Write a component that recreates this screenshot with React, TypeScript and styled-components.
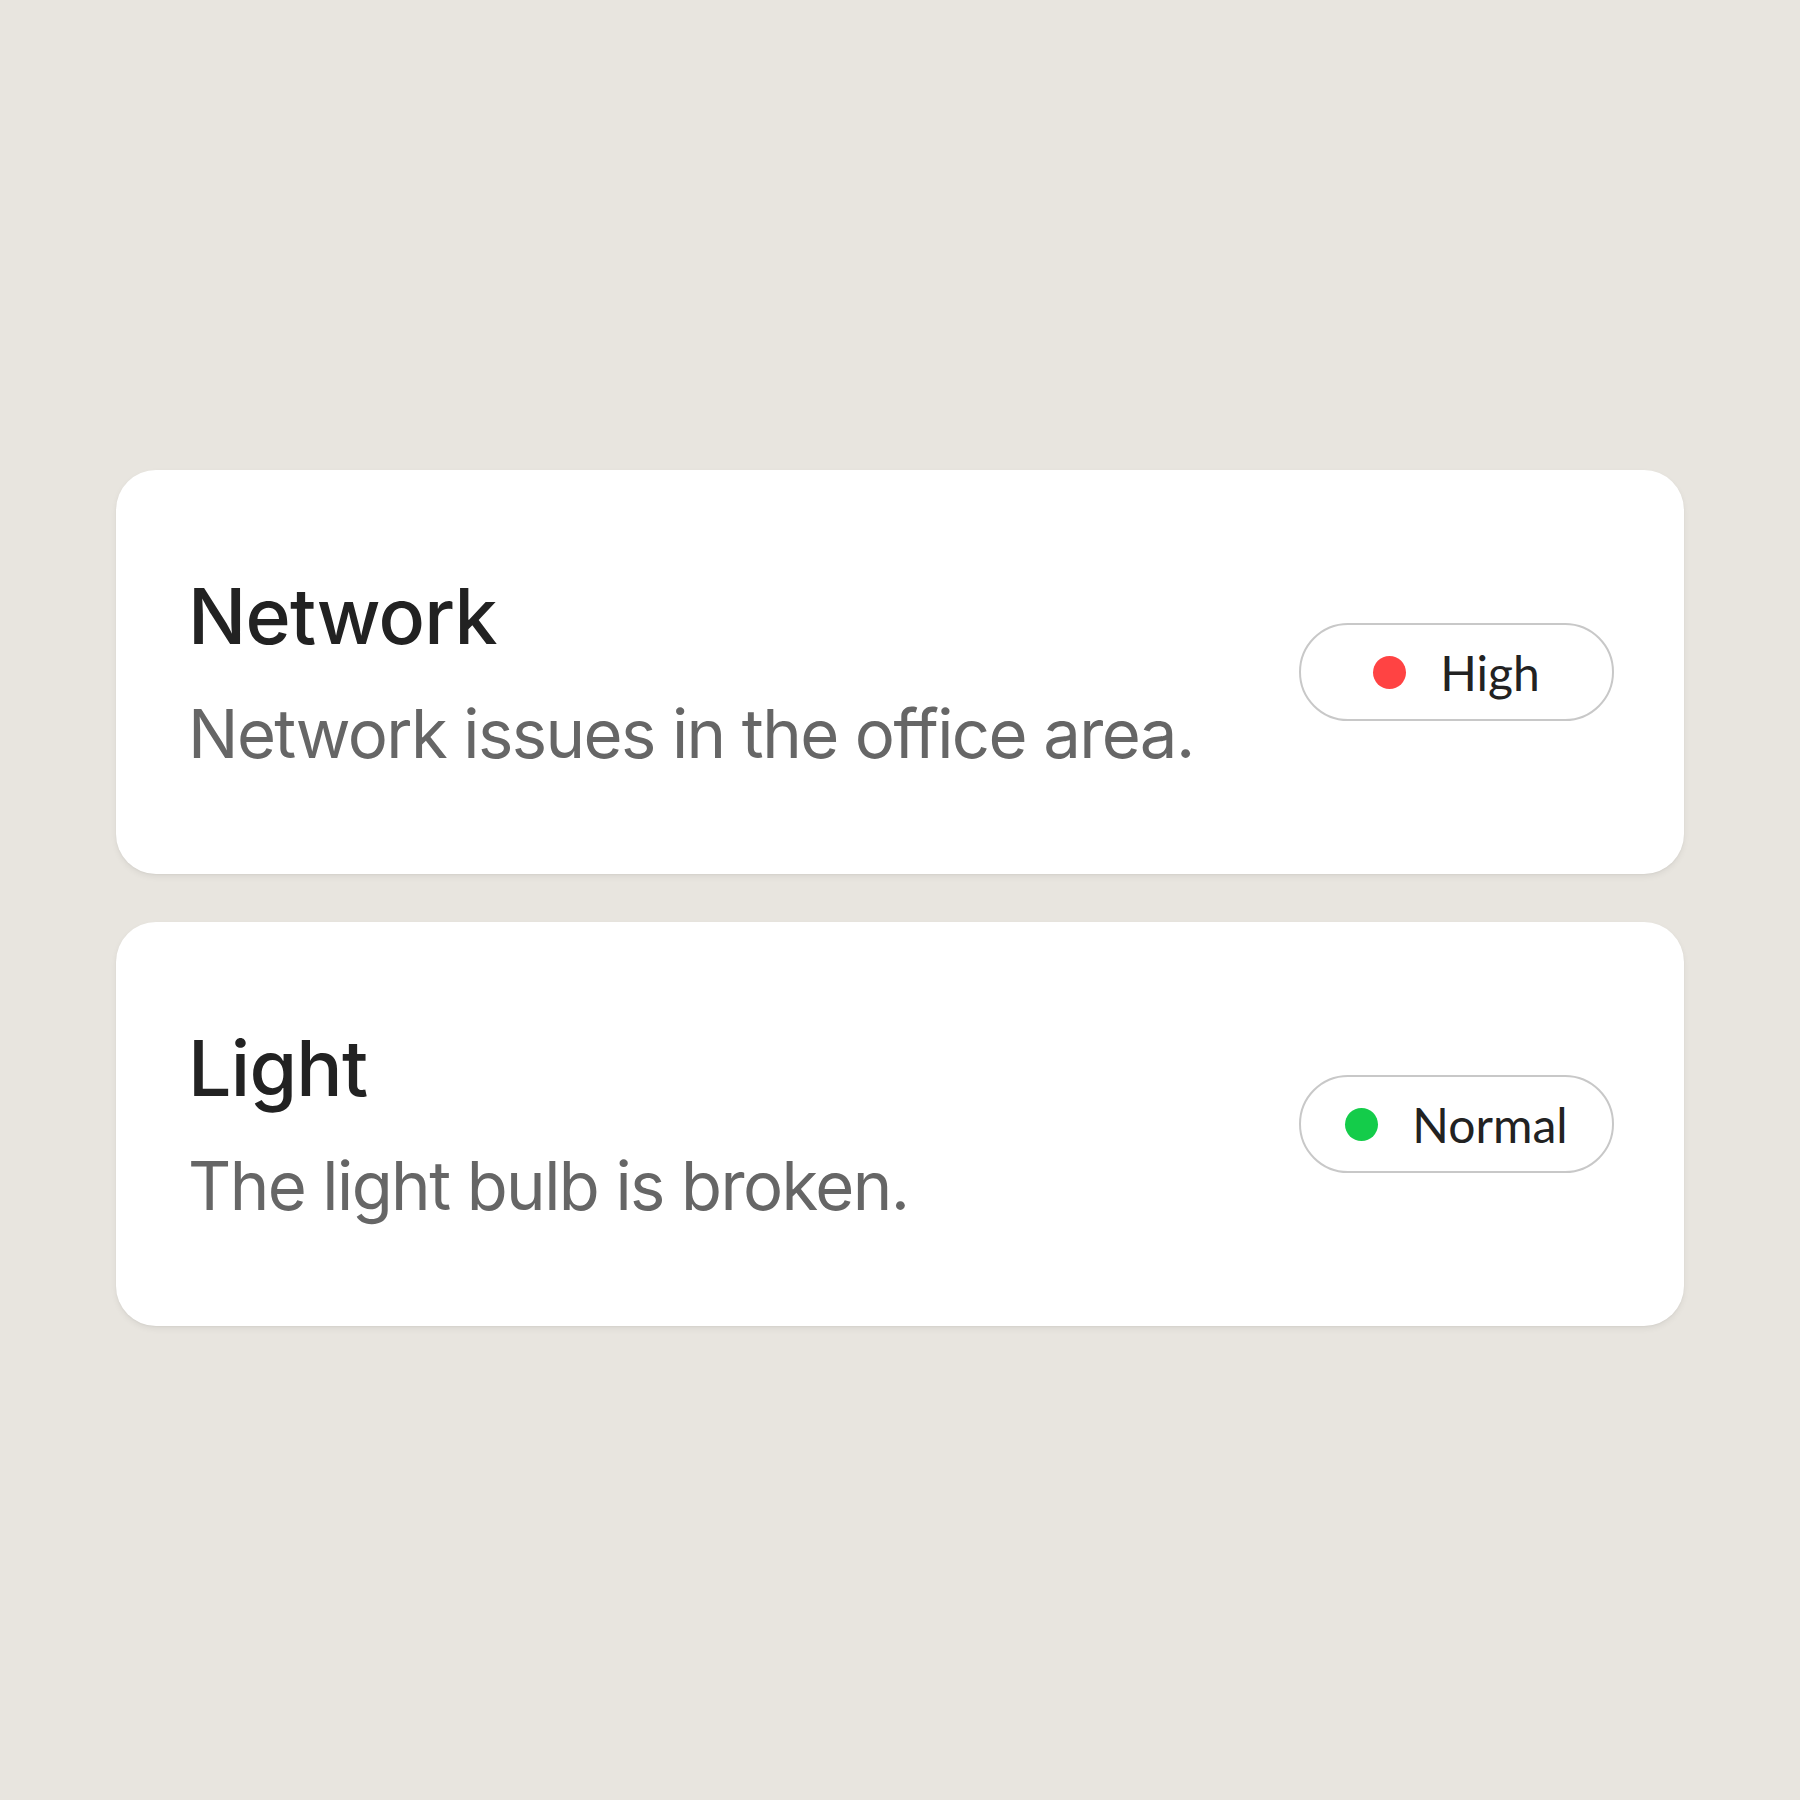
import styled, { createGlobalStyle } from "styled-components";

const GlobalStyle = createGlobalStyle`
  html, body {
    margin: 0;
    padding: 0;
    background: #e8e5df;
  }
  body {
    font-family: Inter, "Noto Sans", sans-serif;
  }
`;

const Page = styled.main`
  width: 1800px;
  height: 1800px;
  display: flex;
  flex-direction: column;
  justify-content: center;
  align-items: center;
  gap: 48px;
  margin-top: -2px;
  background: #e8e5df;
`;

const Card = styled.article`
  width: 1568px;
  height: 404px;
  box-sizing: border-box;
  background: #ffffff;
  border-radius: 40px;
  padding: 0 70px 0 72px;
  display: flex;
  align-items: center;
  justify-content: space-between;
  box-shadow: 0 3px 6px rgba(0, 0, 0, 0.06), 0 1px 2px rgba(0, 0, 0, 0.04);
`;

const Text = styled.div`
  display: flex;
  flex-direction: column;
  gap: 30px;
`;

const Title = styled.h2`
  margin: 0;
  font-size: 77px;
  line-height: 92px;
  font-weight: 500;
  color: #222222;
  letter-spacing: -0.01em;
`;

const Description = styled.p`
  margin: 0;
  font-size: 67px;
  line-height: 83px;
  font-weight: 400;
  color: #666666;
  letter-spacing: -1.6px;
`;

const Badge = styled.div`
  width: 315px;
  height: 98px;
  box-sizing: border-box;
  border: 2.5px solid #c8c8c8;
  border-radius: 999px;
  display: flex;
  align-items: center;
  justify-content: center;
  gap: 34px;
  font-family: Lato, "Noto Sans", sans-serif;
  font-size: 48px;
  color: #222222;
`;

const Dot = styled.span<{ $color: string }>`
  width: 33px;
  height: 33px;
  border-radius: 50%;
  background: ${(p) => p.$color};
  flex-shrink: 0;
`;

type Issue = {
  title: string;
  description: string;
  level: string;
  color: string;
};

const issues: Issue[] = [
  {
    title: "Network",
    description: "Network issues in the office area.",
    level: "High",
    color: "#ff4343",
  },
  {
    title: "Light",
    description: "The light bulb is broken.",
    level: "Normal",
    color: "#14cc4a",
  },
];

export default function App() {
  return (
    <>
      <GlobalStyle />
      <Page>
        {issues.map((issue) => (
          <Card key={issue.title}>
            <Text>
              <Title>{issue.title}</Title>
              <Description>{issue.description}</Description>
            </Text>
            <Badge>
              <Dot $color={issue.color} />
              {issue.level}
            </Badge>
          </Card>
        ))}
      </Page>
    </>
  );
}
